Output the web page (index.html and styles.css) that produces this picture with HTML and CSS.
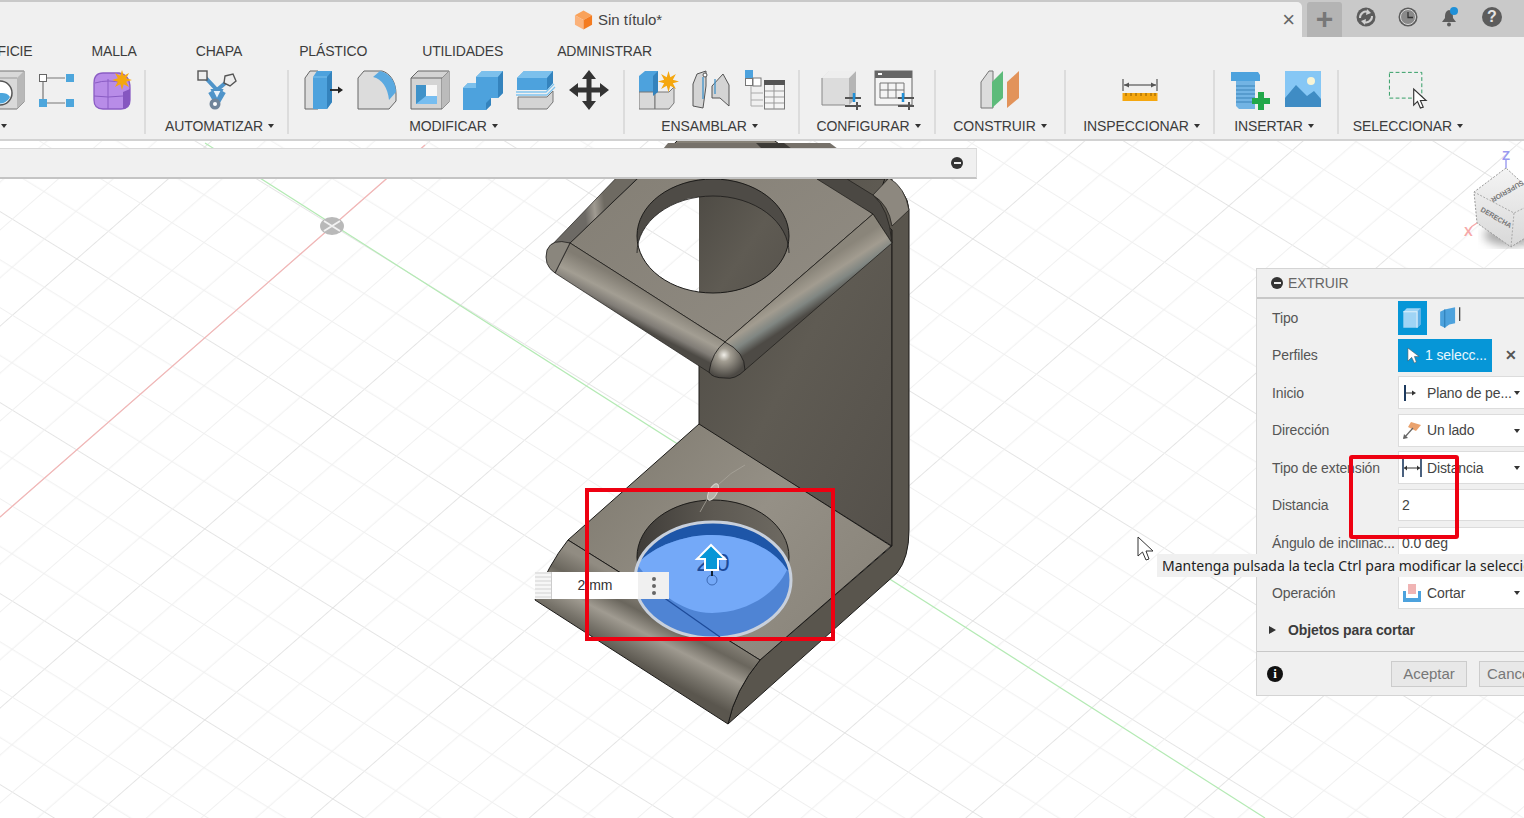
FILE: index.html
```html
<!DOCTYPE html>
<html lang="es">
<head>
<meta charset="utf-8">
<title>Sin título*</title>
<link rel="stylesheet" href="styles.css">
</head>
<body>
<svg class="sprite" aria-hidden="true"><symbol id="star" viewBox="0 0 20 20"><polygon fill="#f5a70f" points="20,10 14.16,11.72 17.07,17.07 11.72,14.16 10,20 8.28,14.16 2.93,17.07 5.84,11.72 0,10 5.84,8.28 2.93,2.93 8.28,5.84 10,0 11.72,5.84 17.07,2.93 14.16,8.28"/></symbol></svg>
<header class="topbar">
  <div class="doc-tab">
    <svg class="doc-icon" viewBox="0 0 20 20"><path fill="#f9a25a" d="M10 0 19 5 10 10 1 5Z"/><path fill="#fbb27a" d="M1 5 10 10V20L1 15Z"/><path fill="#f47b20" d="M19 5V15L10 20V10Z"/></svg>
    <span class="doc-title">Sin título*</span>
    <span class="doc-close">×</span>
  </div>
  <div class="tray">
    <span class="tray-add">+</span>
    <svg class="tray-icon" viewBox="0 0 20 20"><circle cx="10" cy="10" r="9.5" fill="#5c5c5c"/><path d="M4 11A6 6 0 0 1 12 5M16 9A6 6 0 0 1 8 15" fill="none" stroke="#d0d0d0" stroke-width="2"/><path d="M11 2 15 6 10 8ZM9 18 5 14 10 12Z" fill="#d0d0d0"/></svg>
    <svg class="tray-icon" viewBox="0 0 20 20"><circle cx="10" cy="10" r="9.5" fill="#5c5c5c"/><circle cx="10" cy="10" r="7.5" fill="#8a8a8a" stroke="#d8d8d8"/><path d="M10 5V10.5H15" fill="none" stroke="#333" stroke-width="1.3"/></svg>
    <svg class="tray-icon" viewBox="0 0 20 20"><path d="M9 3C5 4 5 8 5 11L2 15H16L13 11C13 8 13 4 9 3Z" fill="#5c5c5c"/><circle cx="9" cy="17.5" r="2" fill="#5c5c5c"/><circle cx="14" cy="4" r="4" fill="#1f90d8"/></svg>
    <span class="tray-help">?</span>
  </div>
</header>

<nav class="tabs">
  <span class="tab t-sup">SUPERFICIE</span>
  <span class="tab t-mal">MALLA</span>
  <span class="tab t-cha">CHAPA</span>
  <span class="tab t-pla">PLÁSTICO</span>
  <span class="tab t-uti">UTILIDADES</span>
  <span class="tab t-adm">ADMINISTRAR</span>
</nav>

<section class="tools">
  <div class="group g1">
    <div class="icons clip-left">
      <svg class="ic" viewBox="0 0 40 40"><path d="M1 8 8 1H39V32L32 39H1Z" fill="#d9d9d9" stroke="#777"/><path d="M32 39V8L39 1V32Z" fill="#b8b8b8"/><path d="M1 8H32" stroke="#999"/><circle cx="15" cy="23" r="12" fill="#fff" stroke="#555" stroke-width="1.5"/><path d="M4 23A11 11 0 0 0 25 27C20 19 10 26 4 23Z" fill="#4da6dc"/></svg>
      <svg class="ic" viewBox="0 0 40 40"><path d="M8 8H26M4 12V29M8 33H26" stroke="#777" stroke-width="1.2"/><rect x="0.5" y="4.5" width="7" height="7" fill="#fff" stroke="#666"/><rect x="27" y="4" width="8" height="8" fill="#4da6dc"/><rect x="0" y="29" width="8" height="8" fill="#4da6dc"/><rect x="27" y="29" width="8" height="8" fill="#4da6dc"/></svg>
      <svg class="ic" viewBox="0 0 40 40"><path d="M1 13Q1 3 10 3H26Q37 5 37 18V30Q37 39 28 39H10Q1 39 1 30Z" fill="#b88ce8" stroke="#8a5cc4" stroke-width="1.3"/><path d="M30 39Q37 38 37 30V19L30 22Z" fill="#8656c0"/><path d="M1 26Q15 28 30 26M15 9V39M2 13Q15 9 30 13" fill="none" stroke="#8a5cc4"/><use href="#star" x="19" y="0" width="20" height="20"/></svg>
    </div>
    <div class="label"></div>
  </div>
  <div class="group g2">
    <div class="icons">
      <svg class="ic" viewBox="0 0 40 40"><path d="M7 6 20 20 33 9M20 20V31M13 22 20 34 27 22" fill="none" stroke="#4f94c9" stroke-width="4"/><path d="M15 20H25L20 30Z" fill="#e8f2fa" stroke="#4f94c9" stroke-width="2"/><rect x="1" y="1" width="9" height="9" fill="#eee" stroke="#555" stroke-width="1.4"/><path d="M28 6 36 4 39 11 33 16 27 13Z" fill="#eee" stroke="#555" stroke-width="1.4"/><circle cx="18" cy="34" r="5.5" fill="#71859a"/><circle cx="18" cy="34" r="2" fill="#fff"/></svg>
    </div>
    <div class="label caret">AUTOMATIZAR</div>
  </div>
  <div class="group g3">
    <div class="icons">
      <svg class="ic" viewBox="0 0 40 40"><path d="M1 39V8L6 1H14V39Z" fill="#dcdcdc" stroke="#666"/><path d="M9 39V7L13 1H28V32L23 39Z" fill="#4da2dd"/><path d="M23 39V7L28 1V32Z" fill="#3483bd"/><path d="M9 7H23" stroke="#7cc0ec"/><path d="M26 20H37" stroke="#222" stroke-width="1.8"/><path d="M34 16.5 39 20 34 23.5Z" fill="#222"/></svg>
      <svg class="ic" viewBox="0 0 40 40"><path d="M1 39V8L7 1H25C33 3 39 12 39 24V31L32 39Z" fill="#dcdcdc" stroke="#666"/><path d="M16 7 23 1C32 3 39 11 39 22L32 30C31 18 25 9 16 7Z" fill="#5aa9e0"/></svg>
      <svg class="ic" viewBox="0 0 40 40"><path d="M1 8 8 1H39V32L32 39H1Z" fill="#d4d4d4" stroke="#666"/><path d="M1 8H32V39M32 8 39 1" fill="none" stroke="#666"/><path d="M32 8 39 1V32L32 39Z" fill="#bbb"/><rect x="6" y="15" width="21" height="19" fill="#f6f6f6"/><path d="M6 15H16V26H27V34H6Z" fill="#76bdf0"/><path d="M6 15H16V26L6 34Z" fill="#3f92c9"/></svg>
      <svg class="ic" viewBox="0 0 40 40"><path d="M0 18 5 13H13V7L19 1H40V23L35 28H28V35L23 40H0Z" fill="#4da2dd"/><path d="M13 7 19 1H40L35 7Z" fill="#7cc0ec"/><path d="M35 7 40 1V23L35 28Z" fill="#3483bd"/><path d="M0 18 5 13H13V18Z" fill="#7cc0ec"/><path d="M23 40V33L28 28V35Z" fill="#3483bd"/></svg>
      <svg class="ic" viewBox="0 0 40 40"><path d="M1 8 8 1H37V13L31 20H1Z" fill="#4da2dd"/><path d="M1 8 8 1H37L31 8Z" fill="#7cc0ec"/><path d="M31 8 37 1V13L31 20Z" fill="#3483bd"/><path d="M0 22H30L38 14M0 25H31L39 17" fill="none" stroke="#80c4ee" stroke-width="1.3"/><path d="M2 27H31L37 21V32L31 39H2Z" fill="#d4d4d4" stroke="#777"/></svg>
      <svg class="ic" viewBox="0 0 40 40"><path d="M20 0 27 9H22.5V17.5H31V13L40 20 31 27V22.5H22.5V31H27L20 40 13 31H17.5V22.5H9V27L0 20 9 13V17.5H17.5V9H13Z" fill="#333"/></svg>
    </div>
    <div class="label caret">MODIFICAR</div>
  </div>
  <div class="group g4">
    <div class="icons">
      <svg class="ic" viewBox="0 0 40 40"><path d="M0 6 6 1H19V22H0Z" fill="#4da2dd"/><path d="M0 22H16V39H0Z" fill="#d9d9d9" stroke="#777"/><path d="M16 39V22H30L35 17V33L30 39Z" fill="#d9d9d9" stroke="#777"/><path d="M14 6 19 1V22L14 26Z" fill="#3483bd"/><use href="#star" x="19" y="1" width="21" height="21"/></svg>
      <svg class="ic" viewBox="0 0 40 40"><path d="M1 36V14L5 4 14 1V16L11 38Z" fill="#d4d4d4" stroke="#555"/><path d="M20 16 31 4 37 15V36L28 28H20Z" fill="#d4d4d4" stroke="#555"/><path d="M11 7V29" stroke="#3f92c9" stroke-width="1.3"/><path d="M23 9V24" stroke="#3f92c9" stroke-width="1.3"/><circle cx="13" cy="5" r="2" fill="#fff" stroke="#555"/></svg>
      <svg class="ic" viewBox="0 0 40 40"><rect x="0" y="0" width="8" height="8" fill="#4da2dd"/><rect x="8" y="8" width="8" height="8" fill="#fff" stroke="#777"/><rect x="0.5" y="8.5" width="7" height="7" fill="#fff" stroke="#777"/><path d="M6 16V36M6 23H18M6 30H18M6 36H18" stroke="#aaa" fill="none"/><rect x="19.5" y="11" width="20" height="28" fill="#f4f4f4" stroke="#777"/><rect x="19" y="10" width="21" height="5" fill="#555"/><path d="M20 21H39M20 27H39M20 33H39M29 15V39" stroke="#999"/></svg>
    </div>
    <div class="label caret">ENSAMBLAR</div>
  </div>
  <div class="group g5">
    <div class="icons">
      <svg class="ic" viewBox="0 0 40 40"><path d="M1 35V8L8 1H35V28L28 35Z" fill="#dcdcdc"/><path d="M28 35V8L35 1V28Z" fill="#b5b5b5"/><path d="M1 8 8 1H35L28 8Z" fill="#eee"/><path d="M1 8V35H24" fill="none" stroke="#888"/><path d="M24 28H41M24 36H41" stroke="#555" stroke-width="2"/><path d="M33 23V32" stroke="#1f90d8" stroke-width="2.5"/><path d="M36 32V40" stroke="#555" stroke-width="2"/></svg>
      <svg class="ic" viewBox="0 0 40 40"><rect x="1" y="1" width="37" height="34" fill="#f4f4f4" stroke="#666"/><rect x="1" y="1" width="37" height="7" fill="#666"/><rect x="4" y="3" width="4" height="2" fill="#fff"/><path d="M6 13H30V28H6ZM6 20H30M14 13V28M22 13V28" fill="none" stroke="#777"/><path d="M24 28H41M24 36H41" stroke="#555" stroke-width="2"/><path d="M29 23V32" stroke="#1f90d8" stroke-width="2.5"/><path d="M35 32V40" stroke="#555" stroke-width="2"/></svg>
    </div>
    <div class="label caret">CONFIGURAR</div>
  </div>
  <div class="group g6">
    <div class="icons">
      <svg class="ic" viewBox="0 0 40 40"><path d="M1 38V12L9 1H13V38Z" fill="#dcdcdc" stroke="#777"/><path d="M12 38V12L23 1V28Z" fill="#5dbb7a"/><path d="M27 38V12L39 1V28Z" fill="#e2935a"/></svg>
    </div>
    <div class="label caret">CONSTRUIR</div>
  </div>
  <div class="group g7">
    <div class="icons">
      <svg class="ic" viewBox="0 0 40 40"><path d="M3 9V21M37 9V21" stroke="#555" stroke-width="1.2"/><path d="M4 15H36" stroke="#555" stroke-width="1.2"/><path d="M4 15 9 12.5V17.5ZM36 15 31 12.5V17.5Z" fill="#555"/><rect x="2.5" y="23" width="35" height="8" fill="#f5a70f"/><path d="M6 23V26M11 23V26M16 23V26M21 23V26M26 23V26M31 23V26M35 23V26" stroke="#8a5a00"/></svg>
    </div>
    <div class="label caret">INSPECCIONAR</div>
  </div>
  <div class="group g8">
    <div class="icons">
      <svg class="ic" viewBox="0 0 40 40"><path d="M1 2H28L30 5V11H1V5Z" fill="#4da2dd"/><path d="M6 11H25V39H9L6 36Z" fill="#72b4e4"/><path d="M6 16H25M6 20H25M6 24H25M6 28H25M6 32H25" stroke="#3a83b8"/><path d="M22 28H28V22H34V28H40V34H34V40H28V34H22Z" fill="#22a84a"/></svg>
      <svg class="ic" viewBox="0 0 40 40"><rect x="2" y="1" width="36" height="36" fill="#86c7f5"/><circle cx="28" cy="11" r="4" fill="#f7f4d6"/><path d="M2 28 13 15 24 26 31 21 38 29V37H2Z" fill="#3f8cc4"/></svg>
    </div>
    <div class="label caret">INSERTAR</div>
  </div>
  <div class="group g9">
    <div class="icons">
      <svg class="ic" viewBox="0 0 42 40"><rect x="1.5" y="1.5" width="34" height="27" fill="none" stroke="#2a9a5f" stroke-dasharray="4 2.5"/><path d="M27 19V36L31 32 34 39 37 38 34 31 40 31Z" fill="#fff" stroke="#333" stroke-width="1.2"/></svg>
    </div>
    <div class="label caret">SELECCIONAR</div>
  </div>
</section>

<main class="viewport">
  <svg class="scene" viewBox="0 141 1524 677" width="1524" height="677">
    <defs>
      <pattern id="grid" patternUnits="userSpaceOnUse" width="100" height="100" patternTransform="matrix(1.28 .79 1.28 -1.12 332 226)">
        <path d="M0 0H100M0 0V100" stroke="#dcdcdc" stroke-width="1"/>
        <path d="M0 25H100M0 50H100M0 75H100M25 0V100M50 0V100M75 0V100" stroke="#f0f0f0" stroke-width=".7"/>
      </pattern>
      <linearGradient id="wall" x1="0" x2="1" y1="0" y2="1"><stop offset="0" stop-color="#4b4842"/><stop offset=".5" stop-color="#5f5b53"/><stop offset="1" stop-color="#54504a"/></linearGradient>
      <linearGradient id="top" x1="0" x2="1" y1="0" y2="1"><stop offset="0" stop-color="#817c72"/><stop offset="1" stop-color="#928d84"/></linearGradient>
      <linearGradient id="base" x1="0" x2="1" y1="0" y2=".6"><stop offset="0" stop-color="#7b766b"/><stop offset=".6" stop-color="#959086"/><stop offset="1" stop-color="#8a857b"/></linearGradient>
      <linearGradient id="front" gradientUnits="userSpaceOnUse" x1="664" y1="600" x2="632" y2="662"><stop offset="0" stop-color="#918c82"/><stop offset=".3" stop-color="#6a665d"/><stop offset=".55" stop-color="#a09b91"/><stop offset=".8" stop-color="#77736a"/><stop offset="1" stop-color="#5a564e"/></linearGradient>
      <linearGradient id="filL" gradientUnits="userSpaceOnUse" x1="648" y1="292" x2="632" y2="323"><stop offset="0" stop-color="#817c72"/><stop offset=".5" stop-color="#a39e93"/><stop offset=".8" stop-color="#807c76"/><stop offset="1" stop-color="#4d4a45"/></linearGradient>
      <linearGradient id="filR" gradientUnits="userSpaceOnUse" x1="799" y1="278" x2="818" y2="307"><stop offset="0" stop-color="#8a857a"/><stop offset=".4" stop-color="#a29c90"/><stop offset=".7" stop-color="#808682"/><stop offset="1" stop-color="#4d4a45"/></linearGradient>
      <linearGradient id="filB" gradientUnits="userSpaceOnUse" x1="605" y1="211" x2="585" y2="213"><stop offset="0" stop-color="#6e6a62"/><stop offset=".5" stop-color="#a09b92"/><stop offset="1" stop-color="#6d6a65"/></linearGradient>
      <radialGradient id="ball" gradientUnits="userSpaceOnUse" cx="724" cy="355" r="22"><stop offset="0" stop-color="#f0eee8"/><stop offset=".3" stop-color="#a29d92"/><stop offset="1" stop-color="#4d4a45"/></radialGradient>
      <linearGradient id="holeWall" x1="0" x2="1" y1="0" y2="0"><stop offset="0" stop-color="#3f3c38"/><stop offset=".5" stop-color="#5d5952"/><stop offset="1" stop-color="#6e6a62"/></linearGradient>
      <linearGradient id="cube" x1="0" x2="0" y1="0" y2="1"><stop offset="0" stop-color="#f4f4f4"/><stop offset="1" stop-color="#d8d8d8"/></linearGradient>
      <clipPath id="holeOuter"><ellipse cx="713" cy="236" rx="76" ry="57"/></clipPath>
      <clipPath id="holeOffset"><ellipse cx="713" cy="253" rx="76" ry="57"/></clipPath>
      <filter id="soft"><feGaussianBlur stdDeviation="5"/></filter>
    </defs>

    <rect x="0" y="140" width="1524" height="678" fill="#fff"/>
    <rect x="0" y="140" width="1524" height="678" fill="url(#grid)"/>
    <path d="M0 517 425 145" stroke="#f3b4b4" stroke-width="1.2"/>
    <path d="M205 143 1265 818" stroke="#b4eab4" stroke-width="1.2"/>
    <g>
      <ellipse cx="332" cy="226" rx="12" ry="9" fill="#b9b9b9"/>
      <path d="M324 221 340 231M340 221 324 231" stroke="#f2f2f2" stroke-width="2"/>
    </g>

    <!-- back wall and side faces -->
    <path d="M699 179H892V546L699 425Z" fill="url(#wall)" stroke="#1c1b19"/>
    <path d="M892 230V546L760 660Q735 690 728 724L897 573Q909 558 909 530V210Q908 190 885 178L873 214Z" fill="#59554d" stroke="#1c1b19"/>

    <!-- base -->
    <path d="M699 424 891 546 760 660 568 540Z" fill="url(#base)" stroke="#1c1b19"/>
    <path d="M568 540 760 660Q735 690 728 724L535 600Q548 565 568 540Z" fill="url(#front)" stroke="#1c1b19"/>
    <ellipse cx="713" cy="557" rx="76" ry="57" fill="url(#holeWall)" stroke="#1c1b19"/>

    <!-- extrusion preview -->
    <ellipse cx="713" cy="580" rx="78" ry="58" fill="#4f84d4"/>
    <path d="M636 570A78 58 0 0 1 790 570L787 570C775 550 745 535 712 535 685 535 655 545 637 564Z" fill="#1e56a8"/>
    <path d="M637 564C655 545 685 535 712 535 745 535 775 550 787 570 775 595 745 613 712 613 680 613 655 590 637 564Z" fill="#74a9f8"/>
    <ellipse cx="713" cy="580" rx="78" ry="58" fill="none" stroke="#c8d0dc" stroke-width="3"/>
    <path d="M663 597 720 637" stroke="#1c4a99" stroke-width="1.2"/>
    <path d="M700 512Q715 480 745 465" fill="none" stroke="#a8a49b" stroke-width=".8"/>
    <ellipse cx="713" cy="492" rx="4" ry="9" transform="rotate(28 713 492)" fill="#b5b1a8" stroke="#d8d5ce"/>
    <text class="preview-value" x="713" y="571">2.0</text>
    <circle cx="712" cy="580" r="5" fill="none" stroke="#3d6bb5"/>
    <path d="M712 570V576" stroke="#123" stroke-width="2"/>
    <path d="M711 545 725 559H718V570H705V559H697Z" fill="#0696d7" stroke="#fff" stroke-width="2"/>

    <!-- shelf -->
    <path d="M725 342 873 214 720 100 570 243Z" fill="url(#top)" stroke="#1c1b19"/>
    <g clip-path="url(#holeOuter)">
      <rect x="630" y="170" width="170" height="130" fill="#4e4b46"/>
      <g clip-path="url(#holeOffset)">
        <rect x="630" y="170" width="69" height="150" fill="#fff"/>
        <rect x="630" y="170" width="69" height="150" fill="url(#grid)"/>
        <rect x="699" y="170" width="100" height="150" fill="url(#wall)"/>
      </g>
    </g>
    <ellipse cx="713" cy="236" rx="76" ry="57" fill="none" stroke="#1c1b19"/>
    <path d="M637 253A76 57 0 0 1 789 253" fill="none" stroke="#1c1b19" stroke-width=".8"/>
    <path d="M570 243 644 172H622L547 250Z" fill="url(#filB)" stroke="#1c1b19" stroke-width=".7"/>
    <path d="M817 179H847L873 195Q889 208 892 243L873 214Z" fill="#4b4843" stroke="#1c1b19" stroke-width=".7"/>
    <path d="M873 195 889 178Q905 187 909 210L892 226Q889 205 873 195Z" fill="#8d887f" stroke="#1c1b19" stroke-width=".7"/>
    <path d="M570 243 725 342 710 373 555 273Z" fill="url(#filL)" stroke="#1c1b19" stroke-width=".7"/>
    <path d="M725 342 873 214 892 243 745 370Z" fill="url(#filR)" stroke="#1c1b19" stroke-width=".7"/>
    <path d="M725 342Q745 352 745 370 735 380 725 378 712 378 709 372 712 352 725 342Z" fill="url(#ball)" stroke="#1c1b19" stroke-width=".8"/>
    <path d="M570 243Q552 238 547 250 543 265 555 273Z" fill="#8a867d" stroke="#1c1b19" stroke-width=".8"/>
    <path d="M663 149 668 143H830L838 149Z" fill="#76716a"/>
    <path d="M762 149 756 143H784L792 149Z" fill="#3c3a36"/>

    <!-- view cube -->
    <ellipse cx="1510" cy="235" rx="26" ry="11" fill="#aaa" filter="url(#soft)"/>
    <path d="M1506 168 1474 192 1477 223 1511 247 1530 235V190Z" fill="url(#cube)" stroke="#999" stroke-dasharray="2 1.5"/>
    <path d="M1474 192 1514 213 1530 205M1514 213 1511 247" fill="none" stroke="#aaa" stroke-dasharray="2 1.5"/>
    <text class="cube-text" transform="translate(1522 180) rotate(150)">SUPERIOR</text>
    <text class="cube-text" transform="translate(1480 211) rotate(30)">DERECHA</text>
    <path d="M1506 160V168" stroke="#9a9af0" stroke-width="1.4"/>
    <path d="M1477 223 1471 227" stroke="#f6a8a8" stroke-width="1.4"/>
    <text class="axis-z" x="1502" y="160">Z</text>
    <text class="axis-x" x="1464" y="236">X</text>

    <!-- mouse pointer -->
    <path d="M1138 537V556L1142.500 552 1146 560 1149 559 1146 551 1153 551Z" fill="#fff" stroke="#333"/>
  </svg>

  <div class="browser-strip"><span class="minus strip-minus"></span></div>

  <div class="dim-input">
    <span class="dim-grip"></span>
    <span class="dim-field">2 mm</span>
    <span class="dim-dots"><i></i><i></i><i></i></span>
  </div>

  <aside class="panel">
    <div class="panel-head"><span class="minus"></span>EXTRUIR</div>
    <div class="row">
      <span class="row-label">Tipo</span>
      <span class="type-btn active"><svg viewBox="0 0 20 20" class="md"><path d="M2 5 5 2H17V16L14 19H2Z" fill="#9fd4f5"/><path d="M14 5 17 2V16L14 19Z" fill="#5fb0e6"/><path d="M2 5H14V19" fill="none" stroke="#dff1fb"/></svg></span>
      <span class="type-btn"><svg viewBox="0 0 20 20" class="md"><path d="M1 5 5 3 14 1V15L9 16 5 19 1 17Z" fill="#4da2dd"/><path d="M5 3V19" stroke="#2f7fb8"/><path d="M18 1V13" stroke="#333"/></svg></span>
    </div>
    <div class="row">
      <span class="row-label">Perfiles</span>
      <span class="sel-btn"><svg viewBox="0 0 14 18" class="pointer"><path d="M1 1V15L5 11 8 17 10 16 8 10 13 10Z" fill="#fff" stroke="#555" stroke-width=".6"/></svg>1 selecc...</span>
      <span class="clear">✕</span>
    </div>
    <div class="row">
      <span class="row-label">Inicio</span>
      <span class="select"><svg viewBox="0 0 20 20" class="sm"><path d="M3 2V18" stroke="#1d3a5f" stroke-width="2"/><path d="M4 10H12" stroke="#333"/><path d="M10 7.500 14 10 10 12.500Z" fill="#333"/></svg><span class="sel-text">Plano de pe...</span></span>
    </div>
    <div class="row">
      <span class="row-label">Dirección</span>
      <span class="select"><svg viewBox="0 0 20 20" class="sm"><path d="M9 2 19 5 14 11 6 7Z" fill="#eaa26d"/><path d="M2 18 11 8" stroke="#666" stroke-width="1.2"/><path d="M1 19 2 14 6 18Z" fill="#666"/></svg><span class="sel-text">Un lado</span></span>
    </div>
    <div class="row">
      <span class="row-label">Tipo de extensión</span>
      <span class="select"><svg viewBox="0 0 20 20" class="sm"><path d="M1 1V19M19 1V19" stroke="#1d3a5f" stroke-width="1.6"/><path d="M2 10H18" stroke="#333"/><path d="M5 7.500 2 10 5 12.500ZM15 7.500 18 10 15 12.500Z" fill="#333"/></svg><span class="sel-text">Distancia</span></span>
    </div>
    <div class="row">
      <span class="row-label">Distancia</span>
      <span class="input">2</span>
    </div>
    <div class="row">
      <span class="row-label">Ángulo de inclinac...</span>
      <span class="input">0.0 deg</span>
    </div>
    <div class="row row-op">
      <span class="row-label">Operación</span>
      <span class="select"><svg viewBox="0 0 20 20" class="sm"><rect x="6" y="1" width="8" height="10" fill="#f0b4b4"/><path d="M1 8H4V15H16V8H19V19H1Z" fill="#4da2dd"/></svg><span class="sel-text">Cortar</span></span>
    </div>
    <div class="row row-group"><span class="tri"></span>Objetos para cortar</div>
    <div class="panel-foot">
      <span class="info">i</span>
      <button class="btn btn-ok">Aceptar</button>
      <button class="btn btn-cancel">Cancelar</button>
    </div>
  </aside>

  <div class="tooltip">Mantenga pulsada la tecla Ctrl para modificar la selección</div>
  <div class="red-box red-model"></div>
  <div class="red-box red-panel"></div>
</main>
</body>
</html>
```

FILE: styles.css
```css
* { box-sizing: border-box; }
html, body { margin: 0; height: 100%; overflow: hidden; background: #fff; }
body { font-family: "Liberation Sans", Arial, sans-serif; font-size: 14px; color: #3c3c3c; width: 1524px; height: 818px; }
.sprite { display: none; }

.topbar { display: flex; height: 37px; background: #c9c9c9; padding-top: 2px; }
.doc-tab { width: 1302px; display: flex; align-items: center; padding-left: 574px; background: #f0f0f0; border-top-right-radius: 5px; }
.doc-icon { width: 19px; height: 20px; margin-right: 5px; }
.doc-title { font-size: 15px; color: #444; }
.doc-close { margin-left: auto; margin-right: 7px; font-size: 22px; line-height: 20px; color: #666; }
.tray { flex: 1; display: flex; align-items: center; padding: 0 0 0 5px; }
.tray-add { width: 35px; height: 35px; background: #b4b4b4; border-radius: 3px 3px 0 0; color: #777; font-size: 30px; font-weight: bold; line-height: 33px; text-align: center; }
.tray-icon { width: 20px; height: 20px; margin-left: 14px; margin-top: -5px; }
.tray-icon + .tray-icon { margin-left: 22px; }
.tray-help { width: 20px; height: 20px; margin-left: 22px; margin-top: -5px; border-radius: 50%; background: #5c5c5c; color: #e4e4e4; font-weight: bold; font-size: 16px; line-height: 20px; text-align: center; }

.tabs { height: 27px; background: #f0f0f0; display: flex; align-items: center; overflow: hidden; white-space: nowrap; }
.tab { font-size: 14px; letter-spacing: -.15px; color: #3c3c3c; flex: none; }
.t-sup { margin-left: -50px; }
.t-mal { margin-left: 59px; }
.t-cha { margin-left: 59px; }
.t-pla { margin-left: 57px; }
.t-uti { margin-left: 55px; }
.t-adm { margin-left: 54px; }

.tools { height: 77px; background: #f0f0f0; border-bottom: 2px solid #d2d2d2; display: flex; padding-top: 6px; }
.group { flex: none; height: 64px; display: flex; flex-direction: column; align-items: center; position: relative; border-right: 2px solid #dcdcdc; }
.g1 { width: 146px; align-items: flex-start; }
.g2 { width: 143px; }
.g3 { width: 336px; }
.g4 { width: 175px; }
.g5 { width: 136px; }
.g6 { width: 130px; }
.g7 { width: 149px; }
.g8 { width: 124px; }
.g9 { width: 138px; border-right: 0; }
.icons { height: 41px; display: flex; gap: 13px; }
.clip-left { margin-left: -15px; gap: 14px; }
.ic { width: 40px; height: 40px; display: block; flex: none; }
.label { margin-top: 8px; height: 16px; line-height: 16px; font-size: 14px; letter-spacing: -.1px; color: #3c3c3c; white-space: nowrap; }
.caret::after, .g1 .label::after { content: ""; display: inline-block; margin-left: 5px; vertical-align: 3px; border: 3.5px solid transparent; border-top: 4px solid #333; border-bottom: 0; }
.g1 .label { margin-left: -4px; }
.g2 .label { margin-left: 6px; }
.g3 .label { margin-left: -5px; }
.g4 .label { margin-left: -4px; }
.g5 .label { margin-left: 3px; }
.g7 .label { margin-left: 4px; }
.g8 .label { margin-left: -4px; }

.viewport { position: relative; height: 677px; overflow: hidden; }
.scene { display: block; }
.browser-strip { position: absolute; left: 0; top: 7px; width: 977px; height: 31px; background: #f0f0f0; border-top: 1px solid #d8d8d8; border-right: 1px solid #dcdcdc; border-bottom: 2px solid #c4c4c4; display: flex; align-items: center; justify-content: flex-end; padding-right: 13px; }
.minus { width: 12px; height: 12px; border-radius: 50%; background: #333; position: relative; flex: none; display: inline-block; }
.minus::after { content: ""; position: absolute; left: 2.5px; top: 5px; width: 7px; height: 2px; background: #eee; }

.dim-input { position: absolute; left: 535px; top: 431px; width: 134px; height: 27px; display: flex; background: #f0f0f0; }
.dim-grip { width: 17px; background: repeating-linear-gradient(#e4e4e4 0 2px, #f6f6f6 2px 4px); border-right: 1px solid #ccc; }
.dim-field { width: 86px; background: #fff; text-align: center; line-height: 27px; font-size: 14px; color: #333; }
.dim-dots { flex: 1; display: flex; flex-direction: column; align-items: center; justify-content: center; gap: 3px; }
.dim-dots i { width: 4px; height: 4px; border-radius: 50%; background: #666; }

.panel { position: absolute; right: 0; top: 127px; width: 268px; height: 428px; background: #f0f0f0; border: 1px solid #d4d4d4; border-right: 0; overflow: hidden; color: #555; white-space: nowrap; letter-spacing: -.12px; }
.panel-head { height: 30px; padding-left: 14px; display: flex; align-items: center; gap: 5px; border-bottom: 2px solid #c8c8c8; color: #666; font-size: 14px; }
.row { height: 37.5px; display: flex; align-items: center; padding-left: 15px; font-size: 14px; }
.row-label { width: 126px; flex: none; color: #555; }
.type-btn { width: 29px; height: 34px; display: flex; align-items: center; justify-content: center; }
.type-btn + .type-btn { margin-left: 12px; width: 22px; }
.type-btn.active { background: #0696d7; }
.sm { width: 20px; height: 20px; flex: none; display: block; }
.md { width: 23px; height: 23px; flex: none; display: block; }
.sel-btn { width: 94px; height: 33px; background: #0696d7; color: #e8f6fd; display: flex; align-items: center; padding-left: 9px; gap: 5px; }
.pointer { width: 13px; height: 17px; }
.clear { margin-left: 13px; font-size: 14px; font-weight: bold; color: #555; }
.select { width: 130px; height: 33px; background: #fff; border: 1px solid #dcdcdc; display: flex; align-items: center; padding-left: 3px; gap: 5px; position: relative; color: #444; flex: none; }
.select::after { content: ""; position: absolute; right: 7px; top: 14px; border: 3.5px solid transparent; border-top: 4px solid #333; border-bottom: 0; }
.input { width: 130px; height: 32px; background: #fff; border: 1px solid #dcdcdc; display: flex; align-items: center; padding-left: 3px; color: #444; flex: none; }
.row-op { margin-top: 12.5px; }
.row-group { font-weight: bold; color: #3c3c3c; padding-left: 12px; }
.tri { border: 4.5px solid transparent; border-left: 7px solid #333; border-right: 0; margin-right: 12px; }
.panel-foot { margin-top: 2px; border-top: 1px solid #c8c8c8; height: 44px; position: relative; display: flex; align-items: center; padding-left: 10px; }
.info { width: 16px; height: 16px; flex: none; border-radius: 50%; background: #111; color: #fff; font: bold 13px/16px "Liberation Serif", serif; text-align: center; }
.btn { font: 15px "Liberation Sans", Arial, sans-serif; color: #777; background: #e8e8e8; border: 1px solid #ccc; height: 26px; padding: 0; flex: none; }
.btn-ok { width: 76px; margin-left: 108px; }
.btn-cancel { width: 76px; margin-left: 12px; }

.tooltip { position: absolute; left: 1157px; top: 413px; width: 380px; height: 23px; padding-left: 5px; background: #f0f0f0; font: 14px/23px "Noto Sans", sans-serif; color: #222; white-space: nowrap; overflow: hidden; }

.red-box { position: absolute; border: 4px solid #ee0011; pointer-events: none; }
.red-model { left: 585px; top: 347px; width: 250px; height: 153px; }
.red-panel { left: 1349px; top: 314px; width: 110px; height: 84px; border-radius: 3px; }

.preview-value { font: 24px "Liberation Sans", Arial, sans-serif; fill: #1c4a99; text-anchor: middle; }
.cube-text { font: bold 7px "Liberation Sans", Arial, sans-serif; fill: #777; }
.axis-z { font: bold 13px "Liberation Sans", Arial, sans-serif; fill: #9a9af0; }
.axis-x { font: bold 13px "Liberation Sans", Arial, sans-serif; fill: #f6a8a8; }
```
